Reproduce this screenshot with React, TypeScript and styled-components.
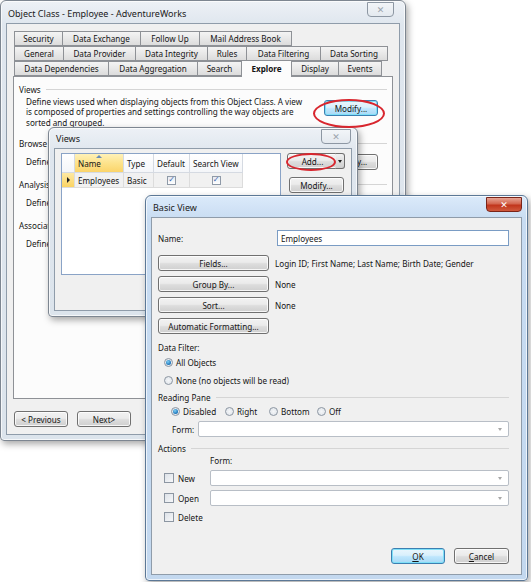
import React from "react";
import styled, { createGlobalStyle, css } from "styled-components";

const Global = createGlobalStyle`
  html, body { margin: 0; padding: 0; background: #ffffff; }
  * { box-sizing: border-box; }
`;

const FONT = `"Noto Sans", "Open Sans", sans-serif`;

const Desktop = styled.div`
  position: relative;
  width: 531px;
  height: 582px;
  overflow: hidden;
  background: #ffffff;
  font-family: ${FONT};
  font-size: 8.15px;
  color: #151515;
`;

const Window = styled.div<{ $x: number; $y: number; $w: number; $h: number; $active?: boolean; $z: number }>`
  position: absolute;
  left: ${(p) => p.$x}px;
  top: ${(p) => p.$y}px;
  width: ${(p) => p.$w}px;
  height: ${(p) => p.$h}px;
  z-index: ${(p) => p.$z};
  display: flex;
  flex-direction: column;
  padding: 0 5px 5px;
  border: 1px solid ${(p) => (p.$active ? "#5c7896" : "#7d8691")};
  border-radius: 6px 6px 4px 4px;
  background: ${(p) =>
    p.$active
      ? "linear-gradient(180deg, #dbeafa 0px, #c8dcf2 24px, #c3d8ef 100%)"
      : "linear-gradient(180deg, #edf1f6 0px, #dfe6ee 24px, #dce4ec 100%)"};
  box-shadow: inset 0 0 0 1px rgba(255, 255, 255, 0.7), 2px 3px 7px rgba(0, 0, 0, 0.35);
`;

const TitleBar = styled.div<{ $h: number }>`
  height: ${(p) => p.$h}px;
  flex: none;
  display: flex;
  align-items: flex-start;
  justify-content: space-between;
`;

const Title = styled.span<{ $top: number }>`
  margin-top: ${(p) => p.$top}px;
  margin-left: 2px;
  font-size: 9px;
  color: #202020;
`;

const CloseBtn = styled.div<{ $active?: boolean; $w: number; $right: number }>`
  width: ${(p) => p.$w}px;
  height: 15px;
  margin-right: ${(p) => p.$right}px;
  margin-top: 1px;
  display: flex;
  align-items: center;
  justify-content: center;
  border-radius: 0 0 4px 4px;
  font-family: "DejaVu Sans", sans-serif;
  font-weight: bold;
  font-size: 9px;
  ${(p) =>
    p.$active
      ? css`
          background: linear-gradient(180deg, #e7a494 0%, #d3654e 45%, #c1351c 55%, #d0593d 100%);
          border: 1px solid #7a2418;
          color: #ffffff;
        `
      : css`
          background: linear-gradient(180deg, #f2f5f8 0%, #e4e9ef 100%);
          border: 1px solid #8d97a3;
          color: #9aa3ad;
        `}
`;

const Client = styled.div<{ $bg?: string }>`
  flex: 1;
  display: flex;
  flex-direction: column;
  border: 1px solid #8f9caa;
  background: ${(p) => p.$bg || "#f0f0f0"};
  min-height: 0;
`;

/* ---------- Main window ---------- */

const MainBody = styled.div`
  flex: 1;
  display: flex;
  flex-direction: column;
  padding: 7px 6px 0 6px;
`;

const TabRow = styled.div<{ $front?: boolean }>`
  display: flex;
  height: 15px;
  padding-left: 1px;
  align-items: flex-end;
  position: relative;
  z-index: ${(p) => (p.$front ? 2 : 1)};
`;

const Tab = styled.div<{ $w: number; $sel?: boolean }>`
  width: ${(p) => p.$w + 1}px;
  margin-left: -1px;
  height: ${(p) => (p.$sel ? 17 : 15)}px;
  margin-bottom: ${(p) => (p.$sel ? -1 : 0)}px;
  border: 1px solid #8e9196;
  border-bottom: ${(p) => (p.$sel ? "none" : "1px solid #8e9196")};
  background: ${(p) => (p.$sel ? "#fcfcfc" : "linear-gradient(180deg, #f4f4f4 0%, #e8e8e8 50%, #dcdcdc 100%)")};
  display: flex;
  align-items: center;
  justify-content: center;
  font-weight: ${(p) => (p.$sel ? 700 : 400)};
  white-space: nowrap;
  padding-bottom: ${(p) => (p.$sel ? 2 : 0)}px;
  &:first-child { margin-left: 0; }
`;

const TabPanel = styled.div`
  height: 323px;
  border: 1px solid #8e9196;
  background: #fcfcfc;
  padding: 6px 5px 0 5px;
  display: flex;
  flex-direction: column;
`;

const Group = styled.div<{ $mt?: number }>`
  margin-top: ${(p) => p.$mt || 0}px;
  display: flex;
  flex-direction: column;
`;

const GroupHead = styled.div<{ $mt?: number }>`
  display: flex;
  align-items: center;
  gap: 5px;
  height: 12px;
  margin-top: ${(p) => p.$mt || 0}px;
  white-space: nowrap;
  &::after {
    content: "";
    flex: 1;
    height: 1px;
    background: #d5d5d5;
  }
`;

const GroupBody = styled.div<{ $mt: number }>`
  margin-top: ${(p) => p.$mt}px;
  padding-left: 7px;
  padding-right: 9px;
  display: flex;
  align-items: flex-start;
  justify-content: space-between;
`;

const Para = styled.div<{ $mt?: number }>`
  width: 284px;
  margin-top: ${(p) => p.$mt || 0}px;
  line-height: 10.3px;
`;

const Button = styled.div<{ $w: number; $h?: number; $focus?: boolean; $mt?: number; $ml?: number }>`
  width: ${(p) => p.$w}px;
  height: ${(p) => p.$h || 16}px;
  margin-top: ${(p) => p.$mt || 0}px;
  margin-left: ${(p) => p.$ml || 0}px;
  flex: none;
  display: flex;
  align-items: center;
  justify-content: center;
  border: 1px solid ${(p) => (p.$focus ? "#3c7fb1" : "#707070")};
  border-radius: 3px;
  background: ${(p) =>
    p.$focus
      ? "linear-gradient(180deg, #eaf6fd 0%, #d9f0fc 45%, #bee6fd 55%, #a7d9f5 100%)"
      : "linear-gradient(180deg, #f2f2f2 0%, #ebebeb 45%, #dddddd 55%, #cfcfcf 100%)"};
  box-shadow: inset 0 0 0 1px ${(p) => (p.$focus ? "#7ee0f8" : "rgba(255,255,255,0.8)")};
  white-space: nowrap;
  color: #151515;
`;

const MainFooter = styled.div`
  display: flex;
  gap: 9px;
  padding: 12px 0 0 1px;
`;

/* ---------- Views window ---------- */

const ViewsBody = styled.div`
  flex: 1;
  display: flex;
  padding: 4px 6px 0 6px;
  gap: 6px;
`;

const Grid = styled.div`
  width: 223px;
  height: 122px;
  border: 1px solid #8aa3c6;
  background: #ffffff;
  display: flex;
  flex-direction: column;
`;

const GridRow = styled.div<{ $h: number }>`
  display: flex;
  height: ${(p) => p.$h}px;
`;

const HeadCell = styled.div<{ $w: number; $sorted?: boolean }>`
  width: ${(p) => p.$w}px;
  position: relative;
  display: flex;
  align-items: center;
  padding-left: 3px;
  white-space: nowrap;
  border-right: 1px solid #d5dae2;
  border-bottom: 1px solid #d5dae2;
  background: ${(p) =>
    p.$sorted
      ? "linear-gradient(180deg, #fff1b8 0%, #fde38c 50%, #fbd46a 100%)"
      : "linear-gradient(180deg, #ffffff 0%, #f4f6f9 100%)"};
`;

const SortCaret = styled.span`
  position: absolute;
  top: 1px;
  left: 50%;
  margin-left: -3px;
  width: 0;
  height: 0;
  border-left: 3px solid transparent;
  border-right: 3px solid transparent;
  border-bottom: 3px solid #6a8db8;
`;

const Cell = styled.div<{ $w: number; $center?: boolean; $sel?: boolean }>`
  width: ${(p) => p.$w}px;
  display: flex;
  align-items: center;
  justify-content: ${(p) => (p.$center ? "center" : "flex-start")};
  padding-left: ${(p) => (p.$center ? 0 : 3)}px;
  border-right: 1px solid #dcdcdc;
  border-bottom: 1px solid #dcdcdc;
  background: ${(p) => (p.$sel ? "linear-gradient(180deg, #fde9a3 0%, #fbd463 100%)" : "#f1f1f1")};
  white-space: nowrap;
`;

const RowArrow = styled.span`
  width: 0;
  height: 0;
  border-top: 3px solid transparent;
  border-bottom: 3px solid transparent;
  border-left: 3px solid #202020;
`;

const GridCheck = styled.div`
  width: 9px;
  height: 9px;
  border: 1px solid #8f9aa8;
  background: linear-gradient(180deg, #e6ebf1 0%, #ffffff 100%);
  display: flex;
  align-items: center;
  justify-content: center;
  font-size: 8px;
  line-height: 1;
  color: #3a64b0;
  font-family: "DejaVu Sans", sans-serif;
`;

const SideCol = styled.div`
  display: flex;
  flex-direction: column;
  gap: 8px;
`;

const SplitWrap = styled.div`
  display: flex;
  width: 58px;
`;

const SplitArrow = styled.div`
  width: 9px;
  height: 16px;
  margin-left: -2px;
  border: 1px solid #707070;
  border-left: none;
  border-radius: 0 3px 3px 0;
  background: linear-gradient(180deg, #f2f2f2 0%, #dddddd 55%, #cfcfcf 100%);
  display: flex;
  align-items: center;
  justify-content: center;
  &::after {
    content: "";
    border-left: 2.5px solid transparent;
    border-right: 2.5px solid transparent;
    border-top: 3px solid #202020;
  }
`;

/* ---------- Basic View ---------- */

const BVBody = styled.div`
  flex: 1;
  display: flex;
  flex-direction: column;
  padding: 12px 12px 10px 6px;
`;

const Row = styled.div<{ $mt: number; $h?: number; $indent?: number; $gap?: number }>`
  display: flex;
  align-items: center;
  margin-top: ${(p) => p.$mt}px;
  height: ${(p) => p.$h || 12}px;
  padding-left: ${(p) => p.$indent || 0}px;
  gap: ${(p) => p.$gap || 0}px;
  white-space: nowrap;
`;

const Label = styled.span<{ $w?: number }>`
  width: ${(p) => (p.$w ? `${p.$w}px` : "auto")};
  flex: none;
`;

const TextInput = styled.div`
  flex: 1;
  height: 16px;
  border: 1px solid #7a9cc4;
  background: #ffffff;
  display: flex;
  align-items: center;
  padding-left: 3px;
`;

const Combo = styled.div`
  flex: 1;
  height: 16px;
  border: 1px solid #b8bec6;
  border-radius: 2px;
  background: #ffffff;
  display: flex;
  align-items: center;
  justify-content: flex-end;
  padding-right: 6px;
  &::after {
    content: "";
    border-left: 2.5px solid transparent;
    border-right: 2.5px solid transparent;
    border-top: 3px solid #a8a8a8;
  }
`;

const Radio = styled.span<{ $on?: boolean }>`
  width: 9px;
  height: 9px;
  border-radius: 50%;
  border: 1px solid #8c96a2;
  background: radial-gradient(circle, #f4f6f8 0%, #dde2e8 100%);
  display: inline-flex;
  align-items: center;
  justify-content: center;
  margin-right: 3px;
  flex: none;
  &::after {
    content: "";
    width: 5px;
    height: 5px;
    border-radius: 50%;
    background: ${(p) => (p.$on ? "radial-gradient(circle at 40% 35%, #7fd0f5 0%, #1a72b8 70%, #10508a 100%)" : "transparent")};
  }
`;

const RadioItem = styled.span<{ $w?: number }>`
  display: inline-flex;
  align-items: center;
  width: ${(p) => (p.$w ? `${p.$w}px` : "auto")};
  flex: none;
`;

const Check = styled.span`
  width: 10px;
  height: 10px;
  border: 1px solid #8c96a2;
  background: linear-gradient(135deg, #dde2e8 0%, #f6f7f9 100%);
  margin-right: 4px;
  flex: none;
`;

const CheckItem = styled.span<{ $w: number }>`
  display: inline-flex;
  align-items: center;
  width: ${(p) => p.$w}px;
  flex: none;
`;

const FooterButtons = styled.div`
  margin-top: auto;
  display: flex;
  justify-content: flex-end;
  gap: 9px;
`;

const Ellipse = styled.div<{ $x: number; $y: number; $w: number; $h: number }>`
  position: absolute;
  left: ${(p) => p.$x}px;
  top: ${(p) => p.$y}px;
  width: ${(p) => p.$w}px;
  height: ${(p) => p.$h}px;
  border: 2px solid #d8262e;
  border-radius: 50%;
  z-index: 10;
  pointer-events: none;
`;

const row1 = [
  ["Security", 48],
  ["Data Exchange", 78],
  ["Follow Up", 59],
  ["Mail Address Book", 92],
] as const;
const row2 = [
  ["General", 49],
  ["Data Provider", 72],
  ["Data Integrity", 72],
  ["Rules", 39],
  ["Data Filtering", 74],
  ["Data Sorting", 67],
] as const;
const row3 = [
  ["Data Dependencies", 94],
  ["Data Aggregation", 89],
  ["Search", 44],
  ["Explore", 50],
  ["Display", 47],
  ["Events", 43],
] as const;

export default function App() {
  return (
    <Desktop>
      <Global />

      {/* Main window */}
      <Window $x={0} $y={0} $w={406} $h={441} $z={1}>
        <TitleBar $h={22}>
          <Title $top={6}>Object Class - Employee - AdventureWorks</Title>
          <CloseBtn $w={27} $right={6}>✕</CloseBtn>
        </TitleBar>
        <Client>
          <MainBody>
            <TabRow>
              {row1.map(([t, w]) => (
                <Tab key={t} $w={w}>{t}</Tab>
              ))}
            </TabRow>
            <TabRow>
              {row2.map(([t, w]) => (
                <Tab key={t} $w={w}>{t}</Tab>
              ))}
            </TabRow>
            <TabRow $front>
              {row3.map(([t, w]) => (
                <Tab key={t} $w={w} $sel={t === "Explore"}>{t}</Tab>
              ))}
            </TabRow>
            <TabPanel>
              <Group>
                <GroupHead>Views</GroupHead>
                <GroupBody $mt={2}>
                  <Para>
                    Define views used when displaying objects from this Object Class. A view is composed of
                    properties and settings controlling the way objects are sorted and grouped.
                  </Para>
                  <Button $w={54} $focus $mt={3}>Modify...</Button>
                </GroupBody>
              </Group>
              <Group $mt={10}>
                <GroupHead>Browse</GroupHead>
                <GroupBody $mt={4}>
                  <Para $mt={3}>Define how objects are browsed.</Para>
                  <Button $w={54}>Modify...</Button>
                </GroupBody>
              </Group>
              <Group $mt={9}>
                <GroupHead>Analysis</GroupHead>
                <GroupBody $mt={4}>
                  <Para $mt={3}>Define how objects are analysed.</Para>
                  <Button $w={54}>Modify...</Button>
                </GroupBody>
              </Group>
              <Group $mt={9}>
                <GroupHead>Association</GroupHead>
                <GroupBody $mt={4}>
                  <Para $mt={3}>Define associations.</Para>
                  <Button $w={54}>Modify...</Button>
                </GroupBody>
              </Group>
            </TabPanel>
            <MainFooter>
              <Button $w={54}>&lt; Previous</Button>
              <Button $w={54}>Next&gt;</Button>
            </MainFooter>
          </MainBody>
        </Client>
      </Window>

      {/* Views window */}
      <Window $x={48} $y={127} $w={310} $h={190} $z={2}>
        <TitleBar $h={20}>
          <Title $top={4}>Views</Title>
          <CloseBtn $w={30} $right={1}>✕</CloseBtn>
        </TitleBar>
        <Client>
          <ViewsBody>
            <Grid>
              <GridRow $h={19}>
                <HeadCell $w={13} />
                <HeadCell $w={49} $sorted>
                  <SortCaret />
                  Name
                </HeadCell>
                <HeadCell $w={30}>Type</HeadCell>
                <HeadCell $w={36}>Default</HeadCell>
                <HeadCell $w={53}>Search View</HeadCell>
              </GridRow>
              <GridRow $h={15}>
                <Cell $w={13} $center $sel>
                  <RowArrow />
                </Cell>
                <Cell $w={49}>Employees</Cell>
                <Cell $w={30}>Basic</Cell>
                <Cell $w={36} $center>
                  <GridCheck>✓</GridCheck>
                </Cell>
                <Cell $w={53} $center>
                  <GridCheck>✓</GridCheck>
                </Cell>
              </GridRow>
            </Grid>
            <SideCol>
              <SplitWrap>
                <Button $w={51}>Add...</Button>
                <SplitArrow />
              </SplitWrap>
              <Button $w={55} $ml={2}>Modify...</Button>
            </SideCol>
          </ViewsBody>
        </Client>
      </Window>

      {/* Basic View window */}
      <Window $x={145} $y={195} $w={383} $h={386} $active $z={3}>
        <TitleBar $h={21}>
          <Title $top={5}>Basic View</Title>
          <CloseBtn $w={36} $right={0} $active>✕</CloseBtn>
        </TitleBar>
        <Client>
          <BVBody>
            <Row $mt={0} $h={16}>
              <Label $w={119}>Name:</Label>
              <TextInput>Employees</TextInput>
            </Row>
            <Row $mt={9} $h={16} $gap={6}>
              <Button $w={111}>Fields...</Button>
              <span>Login ID; First Name; Last Name; Birth Date; Gender</span>
            </Row>
            <Row $mt={5} $h={16} $gap={6}>
              <Button $w={111}>Group By...</Button>
              <span>None</span>
            </Row>
            <Row $mt={5} $h={16} $gap={6}>
              <Button $w={111}>Sort...</Button>
              <span>None</span>
            </Row>
            <Row $mt={5} $h={16}>
              <Button $w={111}>Automatic Formatting...</Button>
            </Row>
            <Row $mt={7}>Data Filter:</Row>
            <Row $mt={3} $indent={6}>
              <RadioItem>
                <Radio $on />
                All Objects
              </RadioItem>
            </Row>
            <Row $mt={6} $indent={6}>
              <RadioItem>
                <Radio />
                None (no objects will be read)
              </RadioItem>
            </Row>
            <GroupHead $mt={5}>Reading Pane</GroupHead>
            <Row $mt={2} $indent={13}>
              <RadioItem $w={54}>
                <Radio $on />
                Disabled
              </RadioItem>
              <RadioItem $w={44}>
                <Radio />
                Right
              </RadioItem>
              <RadioItem $w={48}>
                <Radio />
                Bottom
              </RadioItem>
              <RadioItem>
                <Radio />
                Off
              </RadioItem>
            </Row>
            <Row $mt={4} $h={16} $indent={14}>
              <Label $w={26}>Form:</Label>
              <Combo />
            </Row>
            <GroupHead $mt={5}>Actions</GroupHead>
            <Row $mt={0} $indent={52}>Form:</Row>
            <Row $mt={4} $h={16} $indent={6}>
              <CheckItem $w={46}>
                <Check />
                New
              </CheckItem>
              <Combo />
            </Row>
            <Row $mt={4} $h={16} $indent={6}>
              <CheckItem $w={46}>
                <Check />
                Open
              </CheckItem>
              <Combo />
            </Row>
            <Row $mt={5} $indent={6}>
              <CheckItem $w={46}>
                <Check />
                Delete
              </CheckItem>
            </Row>
            <FooterButtons>
              <Button $w={54} $focus>
                <span><u>O</u>K</span>
              </Button>
              <Button $w={55}>
                <span><u>C</u>ancel</span>
              </Button>
            </FooterButtons>
          </BVBody>
        </Client>
      </Window>

      <Ellipse $x={313} $y={99} $w={72} $h={29} />
      <Ellipse $x={286} $y={153} $w={50} $h={18} />
    </Desktop>
  );
}
